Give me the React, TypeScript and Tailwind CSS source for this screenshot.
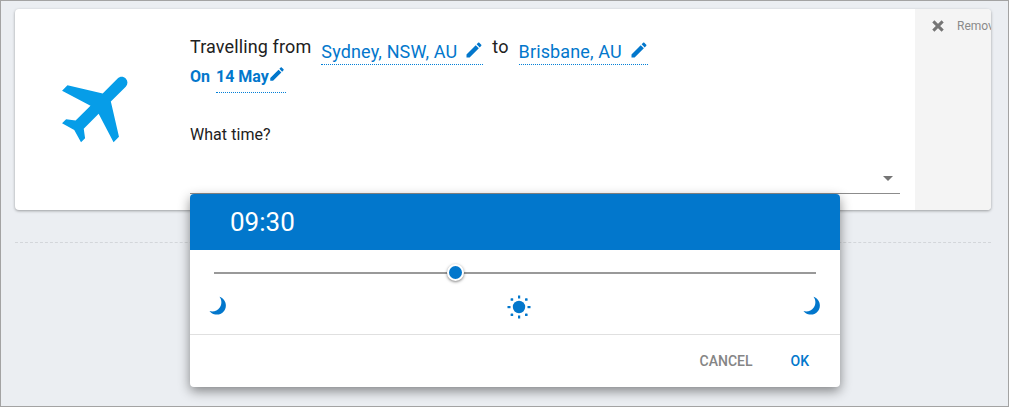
import React from 'react'

const Pencil = ({ className }: { className: string }) => (
  <svg viewBox="0 0 24 24" className={className} fill="currentColor">
    <path d="M3 17.25V21h3.75L17.81 9.94l-3.75-3.75L3 17.25zM20.71 7.04c.39-.39.39-1.02 0-1.41l-2.34-2.34c-.39-.39-1.02-.39-1.41 0l-1.83 1.83 3.75 3.75 1.83-1.83z" />
  </svg>
)

const Moon = () => (
  <svg viewBox="0 0 24 24" className="w-[22px] h-[22px] rotate-[35deg] text-[#0277cc]" fill="currentColor">
    <path d="M9 2c-1.05 0-2.05.16-3 .46 4.06 1.27 7 5.06 7 9.54 0 4.48-2.94 8.27-7 9.54.95.3 1.95.46 3 .46 5.52 0 10-4.48 10-10S14.52 2 9 2z" />
  </svg>
)

const Sun = () => (
  <svg viewBox="0 0 24 24" className="w-[24px] h-[24px] text-[#0277cc]" fill="currentColor">
    <circle cx="12" cy="12" r="6.2" />
    <rect x="11" y="0.5" width="2.2" height="3" />
    <rect x="11" y="20.5" width="2.2" height="3" />
    <rect x="0.5" y="11" width="3" height="2.2" />
    <rect x="20.5" y="11" width="3" height="2.2" />
    <rect x="3.6" y="3.2" width="2.6" height="2.6" rx="0.6" />
    <rect x="18" y="3.2" width="2.6" height="2.6" rx="0.6" />
    <rect x="3.6" y="18.4" width="2.6" height="2.6" rx="0.6" />
    <rect x="18" y="18.4" width="2.6" height="2.6" rx="0.6" />
  </svg>
)

const Place = ({ name }: { name: string }) => (
  <span className="inline-flex items-center h-[26px] border-b border-dotted border-[#0280d8] pt-[1px] text-[#0277cc] text-[18px] leading-none tracking-[0.14px]">
    {name}
    <Pencil className="w-[20px] h-[20px] ml-[7px] mr-[-1px] -mt-[5px]" />
  </span>
)

export default function App() {
  return (
    <div className="relative h-[407px] w-[1009px] overflow-hidden border border-[#a3a3a3] bg-[#ebeef2] pl-[14px] pr-[17px] pt-[8px] font-['Roboto',sans-serif]">
      <div className="flex h-[201px] overflow-hidden rounded-[4px] bg-white shadow-[0_1px_3px_rgba(0,0,0,0.35)]">
        <div className="flex w-[175px] shrink-0 justify-center pt-[52px] pr-[5px]">
          <svg viewBox="0 0 24 24" className="h-[92px] w-[92px] rotate-45 text-[#069de8]" fill="currentColor">
            <path d="M21 16v-2l-8-5V3.5c0-.83-.67-1.5-1.5-1.5S10 2.67 10 3.5V9l-8 5v2l8-2.5V19l-2 1.5V22l3.5-1 3.5 1v-1.5L13 19v-5.5l8 2.5z" />
          </svg>
        </div>

        <div className="flex w-[710px] shrink-0 flex-col">
          <div className="flex items-start pt-[27px] text-[18px] leading-[22px] tracking-[0.12px] text-[#212121]">
            <span>Travelling from</span>
            <span className="ml-[10px] mt-[3px]"><Place name="Sydney, NSW, AU" /></span>
            <span className="ml-[9px] mr-[10px]">to</span>
            <span className="mt-[3px]"><Place name="Brisbane, AU" /></span>
          </div>
          <div className="flex h-[28px] items-start pt-[2px] text-[16px] font-bold text-[#0277cc]">
            <span className="leading-[20px]">On</span>
            <span className="ml-[6px] flex h-[26px] w-[70px] items-start border-b border-dotted border-[#0280d8] leading-[20px]">
              14 May
              <Pencil className="-ml-[1px] -mt-[2px] h-[18px] w-[18px] shrink-0" />
            </span>
          </div>
          <div className="mt-[31px] text-[16px] leading-[22px] tracking-[0.05px] text-[#212121]">What time?</div>
          <div className="mt-[23px] flex h-[25px] items-start justify-end border-b border-[#8c8c8c] pr-[7px] pt-[7px]">
            <div className="h-0 w-0 border-x-[5px] border-t-[5px] border-x-transparent border-t-[#757575]" />
          </div>
        </div>

        <div className="ml-[15px] flex min-w-0 flex-1 items-start gap-[11px] overflow-hidden bg-[#f4f4f4] pl-[15px] pt-[9px] text-[12px] font-normal leading-[16px] text-[#8a8a8a] whitespace-nowrap">
          <svg viewBox="0 0 24 24" className="h-[16px] w-[16px] shrink-0 text-[#757575]" fill="none" stroke="currentColor" strokeWidth="4.5">
            <path d="M5 5l14 14M19 5L5 19" />
          </svg>
          <span>Remove</span>
        </div>
      </div>

      <div className="mt-[32px] border-t border-dashed border-[#d3d6da]" />

      <div className="absolute left-[189px] top-[193px] w-[650px] overflow-hidden rounded-[4px] bg-white shadow-[0_4px_12px_rgba(0,0,0,0.45)]">
        <div className="h-[56px] bg-[#0277cc] pl-[40px] pt-[12px] text-[26px] leading-[32px] text-white">09:30</div>
        <div className="px-[24px] pt-[16px]">
          <div className="relative h-[14px]">
            <div className="absolute left-0 right-0 top-[6px] h-[2px] bg-[#999999]" />
            <div className="absolute left-[232.5px] -top-[2px] h-[17px] w-[17px] rounded-full border-2 border-white bg-[#0277cc] shadow-[0_1px_3px_rgba(0,0,0,0.5)]" />
          </div>
          <div className="mt-[15px] flex h-[24px] items-center justify-between">
            <div className="-ml-[6px] -mt-[1px]"><Moon /></div>
            <div className="ml-[5px]"><Sun /></div>
            <div className="-mr-[8px] -mt-[1px]"><Moon /></div>
          </div>
        </div>
        <div className="mt-[15px] flex h-[53px] items-center justify-end gap-[38px] border-t border-[#e0e0e0] pr-[31px] text-[14px] font-medium leading-none">
          <span className="text-[#858585]">CANCEL</span>
          <span className="text-[#0277cc]">OK</span>
        </div>
      </div>
    </div>
  )
}
